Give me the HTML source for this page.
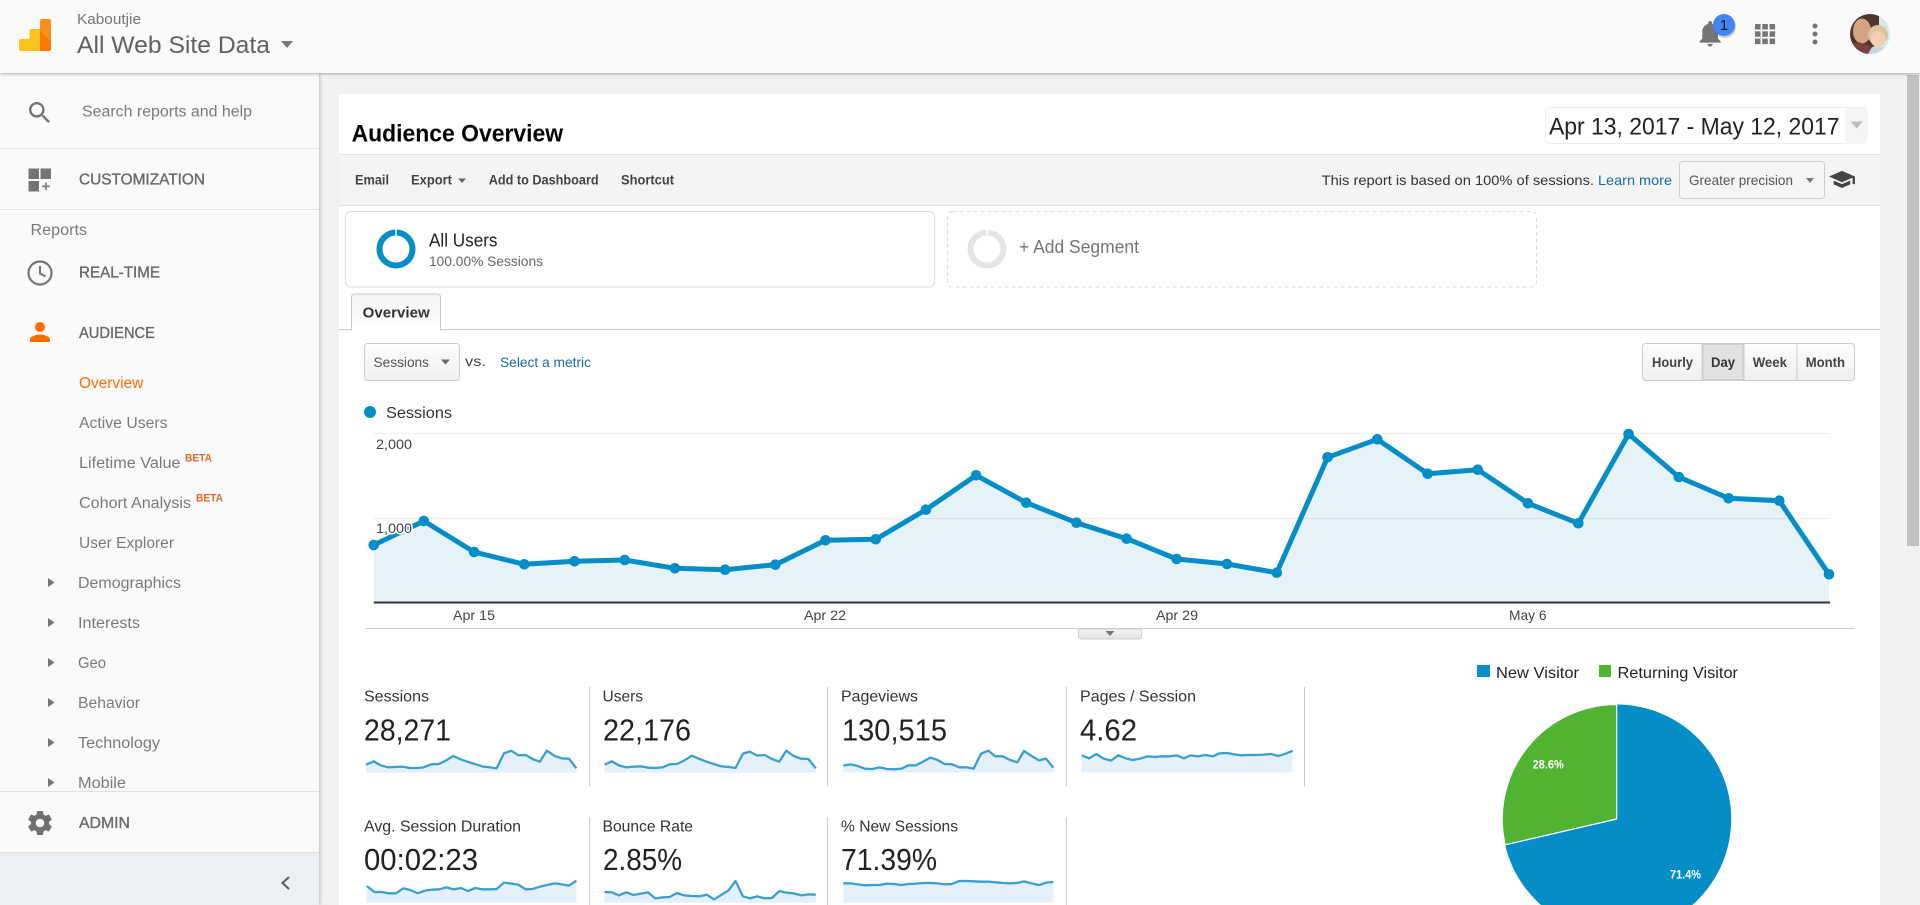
<!DOCTYPE html>
<html lang="en"><head><meta charset="utf-8"><title>Audience Overview - Analytics</title>
<style>
html,body{margin:0;padding:0;width:1920px;height:905px;overflow:hidden;background:#f1f1f1;font-family:"Liberation Sans",sans-serif}
#main{position:absolute;left:339px;top:94px;width:1541px;height:811px;background:#fff}
#toolbar{position:absolute;left:339px;top:154px;width:1541px;height:50px;background:#f4f4f4;border-top:1px solid #e2e2e2;border-bottom:1px solid #ddd}
#side{position:absolute;left:0;top:73px;width:319px;height:832px;background:#fafafa;box-shadow:1px 0 3px rgba(0,0,0,.22)}
#sidefoot{position:absolute;left:0;top:852px;width:319px;height:53px;background:#edf0f3;border-top:1px solid #e0e0e0;box-sizing:border-box}
#head{position:absolute;left:0;top:0;width:1920px;height:73px;background:#fafafa;box-shadow:0 1px 3px rgba(0,0,0,.3)}
#thumb{position:absolute;left:1907px;top:75px;width:12px;height:471px;background:#c1c1c1}
svg{position:absolute;left:0;top:0}
text{font-family:"Liberation Sans",sans-serif}
.s{font-size:15.5px;fill:#7a7a7a}
.m{font-size:15.5px;fill:#6a6a6a;stroke:#6a6a6a;stroke-width:.35}
.b{font-size:11px;font-weight:bold;fill:#e0672b}
.t{font-size:13.5px;font-weight:bold;fill:#444}
.k{font-size:16px;fill:#333}
.v{font-size:31px;fill:#222}
.a{font-size:14px;fill:#444}
.sp{fill:#e4f1fa;stroke:none}
.sl{fill:none;stroke:#3aa0d0;stroke-width:2.3;vector-effect:non-scaling-stroke;stroke-linejoin:round}
</style></head>
<body>
<div id="main"></div>
<div id="toolbar"></div>
<div id="thumb"></div>
<div id="side"></div>
<div id="sidefoot"></div>
<div id="head"></div>
<svg width="1920" height="905" viewBox="0 0 1920 905" xmlns="http://www.w3.org/2000/svg">
<defs>
<linearGradient id="g1" x1="0" y1="0" x2="0" y2="1"><stop offset="0" stop-color="#fdfdfd"/><stop offset="1" stop-color="#efefef"/></linearGradient>
<linearGradient id="g2" x1="0" y1="0" x2="0" y2="1"><stop offset="0" stop-color="#f4f4f4"/><stop offset="1" stop-color="#fff"/></linearGradient>
<linearGradient id="g3" x1="0" y1="0" x2="0" y2="1"><stop offset="0" stop-color="#f6f6f6"/><stop offset="1" stop-color="#e2e2e2"/></linearGradient>
<clipPath id="av"><circle cx="1870" cy="34" r="20"/></clipPath>
<clipPath id="sc"><rect x="0" y="73" width="319" height="718"/></clipPath>
<clipPath id="pg"><rect x="1400" y="640" width="480" height="265"/></clipPath>
</defs>

<!-- header -->
<rect x="19" y="39" width="14" height="12" rx="2" fill="#fdc21c"/>
<rect x="29.5" y="29" width="14" height="22" rx="2" fill="#fdc21c"/>
<rect x="40" y="19" width="11" height="32" rx="2" fill="#f9901e"/>
<path d="M40 30l11 12v7a2 2 0 0 1-2 2h-9z" fill="#f57c00"/>
<text x="77" y="24" font-size="14.5" fill="#757575" textLength="64" lengthAdjust="spacingAndGlyphs">Kaboutjie</text>
<text x="77" y="53" font-size="24" fill="#616161" textLength="193" lengthAdjust="spacingAndGlyphs">All Web Site Data</text>
<path d="M281 41h12l-6 7z" fill="#757575"/>

<g transform="translate(1694.4 17.7) scale(1.31)"><path fill="#757575" d="M12 22c1.1 0 2-.9 2-2h-4c0 1.1.89 2 2 2zm6-6v-5c0-3.07-1.64-5.64-4.5-6.32V4c0-.83-.67-1.5-1.5-1.5s-1.5.67-1.5 1.5v.68C7.63 5.36 6 7.92 6 11v5l-2 2v1h16v-1l-2-2z"/></g>
<circle cx="1725" cy="27" r="11" fill="#000" opacity=".18"/>
<circle cx="1724" cy="25" r="11" fill="#4285f4"/>
<text x="1724" y="30" font-size="14.5" fill="#111" text-anchor="middle">1</text>
<g fill="#757575">
<rect x="1755" y="24" width="5.5" height="5.5"/><rect x="1762.3" y="24" width="5.5" height="5.5"/><rect x="1769.6" y="24" width="5.5" height="5.5"/>
<rect x="1755" y="31.3" width="5.5" height="5.5"/><rect x="1762.3" y="31.3" width="5.5" height="5.5"/><rect x="1769.6" y="31.3" width="5.5" height="5.5"/>
<rect x="1755" y="38.6" width="5.5" height="5.5"/><rect x="1762.3" y="38.6" width="5.5" height="5.5"/><rect x="1769.6" y="38.6" width="5.5" height="5.5"/>
<circle cx="1815" cy="26" r="2.5"/><circle cx="1815" cy="34" r="2.5"/><circle cx="1815" cy="42" r="2.5"/>
</g>
<g clip-path="url(#av)">
<rect x="1850" y="14" width="40" height="40" fill="#d5ecea"/>
<path d="M1850 14h29v12l-7 28h-22z" fill="#4d372e"/>
<ellipse cx="1862" cy="31" rx="9" ry="12.5" fill="#d4a285"/>
<path d="M1850 54v-9l8-3 12 4 2 8z" fill="#7d4040"/>
<ellipse cx="1878" cy="35" rx="10" ry="10" fill="#dcc597"/>
<ellipse cx="1878" cy="39" rx="7.5" ry="8" fill="#f0cfb6"/>
<path d="M1868 54l4-7h12l6 7z" fill="#c8d6e0"/>
</g>

<!-- sidebar -->
<g transform="translate(25.4 98.4) scale(1.2)"><path fill="#757575" d="M15.5 14h-.79l-.28-.27C15.41 12.59 16 11.11 16 9.5 16 5.91 13.09 3 9.5 3S3 5.91 3 9.5 5.91 16 9.5 16c1.61 0 3.09-.59 4.23-1.57l.27.28v.79l5 4.99L20.49 19l-4.99-5zm-6 0C7.01 14 5 11.99 5 9.5S7.01 5 9.5 5 14 7.01 14 9.5 11.99 14 9.5 14z"/></g>
<text x="82" y="116.7" class="s" textLength="170" lengthAdjust="spacingAndGlyphs">Search reports and help</text>
<rect x="0" y="148" width="319" height="1" fill="#e4e4e4"/>
<g fill="#757575"><rect x="28.5" y="168.5" width="10.5" height="10.5"/><rect x="40.5" y="168.5" width="10.5" height="10.5"/><rect x="28.5" y="181" width="10.5" height="10.5"/><path d="M45.2 182.5h1.6v3h3v1.6h-3v3h-1.6v-3h-3v-1.6h3z"/></g>
<text x="79" y="184.5" class="m" textLength="126" lengthAdjust="spacingAndGlyphs">CUSTOMIZATION</text>
<rect x="0" y="209" width="319" height="1" fill="#e4e4e4"/>
<text x="30.5" y="235" class="s" textLength="56.5" lengthAdjust="spacingAndGlyphs">Reports</text>
<circle cx="40" cy="273" r="11.5" fill="none" stroke="#757575" stroke-width="2.2"/>
<path d="M40 266v7.5l5.5 3" fill="none" stroke="#757575" stroke-width="2"/>
<text x="79" y="277.5" class="m" textLength="81" lengthAdjust="spacingAndGlyphs">REAL-TIME</text>
<g transform="translate(25 317) scale(1.25)"><path fill="#ff6d00" d="M12 12c2.21 0 4-1.79 4-4s-1.79-4-4-4-4 1.79-4 4 1.79 4 4 4zm0 2c-2.67 0-8 1.34-8 4v2h16v-2c0-2.66-5.33-4-8-4z"/></g>
<text x="79" y="337.8" class="m" textLength="76" lengthAdjust="spacingAndGlyphs">AUDIENCE</text>
<g clip-path="url(#sc)">
<text x="79" y="387.9" class="s" style="fill:#ff6d00" textLength="64.3" lengthAdjust="spacingAndGlyphs">Overview</text>
<text x="79" y="427.9" class="s" textLength="88.5" lengthAdjust="spacingAndGlyphs">Active Users</text>
<text x="79" y="467.9" class="s" textLength="101.5" lengthAdjust="spacingAndGlyphs">Lifetime Value</text>
<text x="185" y="461.5" class="b" textLength="27" lengthAdjust="spacingAndGlyphs">BETA</text>
<text x="79" y="507.9" class="s" textLength="112" lengthAdjust="spacingAndGlyphs">Cohort Analysis</text>
<text x="196" y="501.5" class="b" textLength="27" lengthAdjust="spacingAndGlyphs">BETA</text>
<text x="79" y="547.9" class="s" textLength="95" lengthAdjust="spacingAndGlyphs">User Explorer</text>
<text x="78" y="587.9" class="s" textLength="103" lengthAdjust="spacingAndGlyphs">Demographics</text>
<text x="78" y="627.9" class="s" textLength="62" lengthAdjust="spacingAndGlyphs">Interests</text>
<text x="78" y="667.9" class="s" textLength="28" lengthAdjust="spacingAndGlyphs">Geo</text>
<text x="78" y="707.9" class="s" textLength="62" lengthAdjust="spacingAndGlyphs">Behavior</text>
<text x="78" y="747.9" class="s" textLength="82" lengthAdjust="spacingAndGlyphs">Technology</text>
<text x="78" y="787.9" class="s" textLength="48" lengthAdjust="spacingAndGlyphs">Mobile</text>
<g fill="#757575"><path d="M48 578v9l6.5-4.5z"/><path d="M48 618v9l6.5-4.5z"/><path d="M48 658v9l6.5-4.5z"/><path d="M48 698v9l6.5-4.5z"/><path d="M48 738v9l6.5-4.5z"/><path d="M48 778v9l6.5-4.5z"/></g>
</g>
<rect x="0" y="791" width="319" height="1" fill="#e0e0e0"/>
<g transform="translate(25.6 808.6) scale(1.2)"><path fill="#707070" d="M19.43 12.98c.04-.32.07-.64.07-.98s-.03-.66-.07-.98l2.11-1.65c.19-.15.24-.42.12-.64l-2-3.46c-.12-.22-.39-.3-.61-.22l-2.49 1c-.52-.4-1.08-.73-1.69-.98l-.38-2.65C14.46 2.18 14.25 2 14 2h-4c-.25 0-.46.18-.49.42l-.38 2.65c-.61.25-1.17.59-1.69.98l-2.49-1c-.23-.09-.49 0-.61.22l-2 3.46c-.13.22-.07.49.12.64l2.11 1.65c-.04.32-.07.65-.07.98s.03.66.07.98l-2.11 1.65c-.19.15-.24.42-.12.64l2 3.46c.12.22.39.3.61.22l2.49-1c.52.4 1.08.73 1.69.98l.38 2.65c.03.24.24.42.49.42h4c.25 0 .46-.18.49-.42l.38-2.65c.61-.25 1.17-.59 1.69-.98l2.49 1c.23.09.49 0 .61-.22l2-3.46c.12-.22.07-.49-.12-.64l-2.11-1.65zM12 15.5c-1.93 0-3.5-1.57-3.5-3.5s1.57-3.5 3.5-3.5 3.5 1.57 3.5 3.5-1.57 3.5-3.5 3.5z"/></g>
<text x="79" y="828" class="m" textLength="51" lengthAdjust="spacingAndGlyphs">ADMIN</text>
<path d="M289 877l-6.5 6 6.5 6" fill="none" stroke="#616161" stroke-width="2.2"/>

<!-- title row -->
<text x="351.6" y="141.5" font-size="24" font-weight="bold" fill="#000" textLength="211.5" lengthAdjust="spacingAndGlyphs">Audience Overview</text>
<rect x="1545.5" y="107.5" width="321.5" height="36" rx="5" fill="#fff" stroke="#eee"/>
<path d="M1845 108h17a5 5 0 0 1 5 5v26a5 5 0 0 1-5 5h-17z" fill="#f5f5f5"/>
<path d="M1850.5 121.5h12.5l-6.25 7z" fill="#bdbdbd"/>
<text x="1549" y="134.5" font-size="24.5" fill="#222" textLength="290.5" lengthAdjust="spacingAndGlyphs">Apr 13, 2017 - May 12, 2017</text>

<!-- toolbar -->
<text x="355" y="184.5" class="t" textLength="34" lengthAdjust="spacingAndGlyphs">Email</text>
<text x="411" y="184.5" class="t" textLength="41" lengthAdjust="spacingAndGlyphs">Export</text>
<path d="M458 178.5h8l-4 4.5z" fill="#666"/>
<text x="488.7" y="184.5" class="t" textLength="110" lengthAdjust="spacingAndGlyphs">Add to Dashboard</text>
<text x="621" y="184.5" class="t" textLength="53" lengthAdjust="spacingAndGlyphs">Shortcut</text>
<text x="1321.7" y="185" font-size="14" fill="#333" textLength="272.3" lengthAdjust="spacingAndGlyphs">This report is based on 100% of sessions.</text>
<text x="1598" y="185" font-size="14" fill="#1a6aa5" textLength="74" lengthAdjust="spacingAndGlyphs">Learn more</text>
<rect x="1679.5" y="161.5" width="145" height="37" rx="3" fill="#f5f5f5" stroke="#ccc"/>
<text x="1689" y="185" font-size="14" fill="#555" textLength="104" lengthAdjust="spacingAndGlyphs">Greater precision</text>
<path d="M1806 178h8l-4 5z" fill="#777"/>
<g transform="translate(1827.8 168) scale(1.18 .95)"><path fill="#444" d="M5 13.18v4L12 21l7-3.82v-4L12 17l-7-3.82zM12 3L1 9l11 6 9-4.91V17h2V9L12 3z"/></g>

<!-- segments -->
<rect x="345.5" y="211.5" width="589" height="75.5" rx="5" fill="#fff" stroke="#ddd"/>
<circle cx="396" cy="249" r="16.5" fill="none" stroke="#058dc7" stroke-width="6"/>
<path d="M396 228v9" stroke="#fff" stroke-width="1.5"/>
<text x="429" y="246.7" font-size="18" fill="#222" textLength="68.5" lengthAdjust="spacingAndGlyphs">All Users</text>
<text x="429" y="266" font-size="14" fill="#666" textLength="114" lengthAdjust="spacingAndGlyphs">100.00% Sessions</text>
<rect x="947.5" y="211.5" width="589" height="75.5" rx="5" fill="#fff" stroke="#ddd" stroke-dasharray="4 3"/>
<circle cx="987" cy="249" r="16.5" fill="none" stroke="#e5e5e5" stroke-width="6"/>
<path d="M987 228v9" stroke="#fff" stroke-width="1.5"/>
<text x="1019" y="253" font-size="18" fill="#757575" textLength="120" lengthAdjust="spacingAndGlyphs">+ Add Segment</text>

<!-- tab -->
<rect x="339" y="329" width="1541" height="1" fill="#ccc"/>
<path d="M351.5 330v-33a3 3 0 0 1 3-3h83a3 3 0 0 1 3 3v33z" fill="url(#g2)" stroke="#ccc"/>
<rect x="352" y="328.5" width="88" height="2" fill="#fff"/>
<text x="362.7" y="317.7" font-size="14.5" font-weight="bold" fill="#333" textLength="67" lengthAdjust="spacingAndGlyphs">Overview</text>

<!-- controls -->
<rect x="364.5" y="343.5" width="95" height="37" rx="3" fill="url(#g1)" stroke="#ccc"/>
<text x="373.5" y="367" font-size="14" fill="#555" textLength="55.5" lengthAdjust="spacingAndGlyphs">Sessions</text>
<path d="M441 359.5h9l-4.5 5z" fill="#666"/>
<text x="465" y="366" font-size="14" fill="#444" textLength="21" lengthAdjust="spacingAndGlyphs">vs.</text>
<text x="500" y="366.8" font-size="14" fill="#1a6aa5" textLength="91" lengthAdjust="spacingAndGlyphs">Select a metric</text>

<rect x="1642.5" y="343.5" width="212" height="37" rx="3" fill="url(#g1)" stroke="#ccc"/>
<rect x="1702.5" y="344" width="41" height="36" fill="#e2e2e2" stroke="#cfcfcf" stroke-width="2"/>
<rect x="1743.5" y="344" width="1" height="36" fill="#ccc"/>
<rect x="1796.5" y="344" width="1" height="36" fill="#ccc"/>
<text x="1652" y="367" class="t" textLength="41" lengthAdjust="spacingAndGlyphs">Hourly</text>
<text x="1711" y="367" class="t" style="fill:#333" textLength="24" lengthAdjust="spacingAndGlyphs">Day</text>
<text x="1752.7" y="367" class="t" textLength="34.3" lengthAdjust="spacingAndGlyphs">Week</text>
<text x="1805.7" y="367" class="t" textLength="39.3" lengthAdjust="spacingAndGlyphs">Month</text>

<!-- legend -->
<circle cx="370" cy="412" r="6" fill="#058dc7"/>
<text x="386" y="418" font-size="16" fill="#333" textLength="66" lengthAdjust="spacingAndGlyphs">Sessions</text>

<!-- chart -->
<rect x="373.7" y="433" width="1456.3" height="1" fill="#eee"/>
<rect x="373.7" y="518" width="1456.3" height="1" fill="#eee"/>
<polygon fill="#058dc7" fill-opacity=".105" points="373.7,602 373.7,545 423.9,521 474.1,552 524.3,564.3 574.5,561.3 624.7,560 674.9,568.3 725.1,569.7 775.3,564.7 825.5,540.3 875.7,539.3 925.9,509.7 976.1,475.3 1026.3,502.7 1076.5,522.7 1126.7,538.7 1176.6,559 1227,564 1276.8,572.7 1327.6,457.3 1377.3,439.3 1427.6,473.7 1477.8,469.7 1528,503.3 1578.3,523.3 1628.6,434 1678.8,477 1728.6,498.3 1779.3,500.7 1829,574.3 1829,602"/>
<rect x="373.7" y="601.5" width="1456.3" height="2" fill="#333"/>
<polyline fill="none" stroke="#058dc7" stroke-width="5" stroke-linejoin="round" points="373.7,545 423.9,521 474.1,552 524.3,564.3 574.5,561.3 624.7,560 674.9,568.3 725.1,569.7 775.3,564.7 825.5,540.3 875.7,539.3 925.9,509.7 976.1,475.3 1026.3,502.7 1076.5,522.7 1126.7,538.7 1176.6,559 1227,564 1276.8,572.7 1327.6,457.3 1377.3,439.3 1427.6,473.7 1477.8,469.7 1528,503.3 1578.3,523.3 1628.6,434 1678.8,477 1728.6,498.3 1779.3,500.7 1829,574.3"/>
<g fill="#058dc7">
<circle cx="373.7" cy="545" r="5.3"/><circle cx="423.9" cy="521" r="5.3"/><circle cx="474.1" cy="552" r="5.3"/><circle cx="524.3" cy="564.3" r="5.3"/><circle cx="574.5" cy="561.3" r="5.3"/><circle cx="624.7" cy="560" r="5.3"/><circle cx="674.9" cy="568.3" r="5.3"/><circle cx="725.1" cy="569.7" r="5.3"/><circle cx="775.3" cy="564.7" r="5.3"/><circle cx="825.5" cy="540.3" r="5.3"/><circle cx="875.7" cy="539.3" r="5.3"/><circle cx="925.9" cy="509.7" r="5.3"/><circle cx="976.1" cy="475.3" r="5.3"/><circle cx="1026.3" cy="502.7" r="5.3"/><circle cx="1076.5" cy="522.7" r="5.3"/><circle cx="1126.7" cy="538.7" r="5.3"/><circle cx="1176.6" cy="559" r="5.3"/><circle cx="1227" cy="564" r="5.3"/><circle cx="1276.8" cy="572.7" r="5.3"/><circle cx="1327.6" cy="457.3" r="5.3"/><circle cx="1377.3" cy="439.3" r="5.3"/><circle cx="1427.6" cy="473.7" r="5.3"/><circle cx="1477.8" cy="469.7" r="5.3"/><circle cx="1528" cy="503.3" r="5.3"/><circle cx="1578.3" cy="523.3" r="5.3"/><circle cx="1628.6" cy="434" r="5.3"/><circle cx="1678.8" cy="477" r="5.3"/><circle cx="1728.6" cy="498.3" r="5.3"/><circle cx="1779.3" cy="500.7" r="5.3"/><circle cx="1829" cy="574.3" r="5.3"/>
</g>
<text x="376" y="449" class="a" textLength="36" lengthAdjust="spacingAndGlyphs">2,000</text>
<text x="376" y="533" class="a" style="paint-order:stroke;stroke:#fff;stroke-width:3px" textLength="36" lengthAdjust="spacingAndGlyphs">1,000</text>
<text x="453" y="620" class="a" textLength="42" lengthAdjust="spacingAndGlyphs">Apr 15</text>
<text x="804" y="620" class="a" textLength="42" lengthAdjust="spacingAndGlyphs">Apr 22</text>
<text x="1156" y="620" class="a" textLength="42" lengthAdjust="spacingAndGlyphs">Apr 29</text>
<text x="1509" y="620" class="a" textLength="37.5" lengthAdjust="spacingAndGlyphs">May 6</text>
<rect x="365.5" y="628" width="1489" height="1" fill="#ccc"/>
<path d="M1078.5 629v8a2 2 0 0 0 2 2h59a2 2 0 0 0 2-2v-8z" fill="url(#g3)" stroke="#d0d0d0"/>
<path d="M1105.5 631h9l-4.500 5z" fill="#777"/>

<!-- metric separators -->
<g fill="#ccc">
<rect x="589" y="687" width="1" height="99"/><rect x="827" y="687" width="1" height="99"/><rect x="1066" y="687" width="1" height="99"/><rect x="1304" y="687" width="1" height="99"/>
<rect x="589" y="817" width="1" height="88"/><rect x="827" y="817" width="1" height="88"/><rect x="1066" y="817" width="1" height="88"/>
</g>

<!-- metrics row 1 -->
<text x="364" y="701.7" class="k" textLength="65" lengthAdjust="spacingAndGlyphs">Sessions</text>
<text x="364" y="740.5" class="v" textLength="87" lengthAdjust="spacingAndGlyphs">28,271</text>
<text x="602.5" y="701.7" class="k" textLength="40.5" lengthAdjust="spacingAndGlyphs">Users</text>
<text x="603" y="740.5" class="v" textLength="88" lengthAdjust="spacingAndGlyphs">22,176</text>
<text x="841" y="701.7" class="k" textLength="77" lengthAdjust="spacingAndGlyphs">Pageviews</text>
<text x="842" y="740.5" class="v" textLength="105" lengthAdjust="spacingAndGlyphs">130,515</text>
<text x="1080" y="701.7" class="k" textLength="116" lengthAdjust="spacingAndGlyphs">Pages / Session</text>
<text x="1080" y="740.5" class="v" textLength="57" lengthAdjust="spacingAndGlyphs">4.62</text>

<!-- metrics row 2 -->
<text x="364" y="831.7" class="k" textLength="157" lengthAdjust="spacingAndGlyphs">Avg. Session Duration</text>
<text x="364" y="870" class="v" textLength="114" lengthAdjust="spacingAndGlyphs">00:02:23</text>
<text x="602.5" y="831.7" class="k" textLength="90.5" lengthAdjust="spacingAndGlyphs">Bounce Rate</text>
<text x="603" y="870" class="v" textLength="79" lengthAdjust="spacingAndGlyphs">2.85%</text>
<text x="841" y="831.7" class="k" textLength="117" lengthAdjust="spacingAndGlyphs">% New Sessions</text>
<text x="841" y="870" class="v" textLength="96" lengthAdjust="spacingAndGlyphs">71.39%</text>

<!-- sparklines -->
<g transform="translate(340 660) scale(.4337 .33333)">
<polygon class="sp" points="60,338 60,314 78,304 94,316 110,322 127,321 144,320 161,324 177,324 193,322 210,313 228,312 244,302 261,288 280,299 296,306 313,313 330,320 346,322 361,325 378,280 395,272 411,286 428,285 444,297 461,305 477,272 495,288 511,295 528,296 545,325 545,338"/>
<polyline class="sl" points="60,314 78,304 94,316 110,322 127,321 144,320 161,324 177,324 193,322 210,313 228,312 244,302 261,288 280,299 296,306 313,313 330,320 346,322 361,325 378,280 395,272 411,286 428,285 444,297 461,305 477,272 495,288 511,295 528,296 545,325"/>
<polygon class="sp" points="610,338 610,314 627,304 643,316 660,322 677,320 694,319 710,323 727,324 744,322 760,313 777,312 793,302 811,287 829,297 845,305 862,312 879,319 896,321 912,324 929,281 945,275 962,287 979,285 996,297 1013,305 1029,272 1046,288 1063,296 1080,297 1097,325 1097,338"/>
<polyline class="sl" points="610,314 627,304 643,316 660,322 677,320 694,319 710,323 727,324 744,322 760,313 777,312 793,302 811,287 829,297 845,305 862,312 879,319 896,321 912,324 929,281 945,275 962,287 979,285 996,297 1013,305 1029,272 1046,288 1063,296 1080,297 1097,325"/>
<polygon class="sp" points="60,728 62,678 79,696 96,696 112,700 129,700 146,685 162,690 179,700 196,692 212,689 229,688 245,682 262,688 279,684 295,693 312,684 329,688 346,688 361,687 378,668 395,671 411,674 428,688 444,687 461,680 477,675 495,670 511,673 528,677 545,662 545,728"/>
<polyline class="sl" points="62,678 79,696 96,696 112,700 129,700 146,685 162,690 179,700 196,692 212,689 229,688 245,682 262,688 279,684 295,693 312,684 329,688 346,688 361,687 378,668 395,671 411,674 428,688 444,687 461,680 477,675 495,670 511,673 528,677 545,662"/>
<polygon class="sp" points="610,728 610,696 627,697 643,706 660,697 677,705 694,701 710,697 727,715 744,712 760,711 777,699 793,706 811,708 829,709 846,704 862,718 879,705 896,691 912,663 929,709 945,715 962,709 979,715 996,714 1013,693 1029,698 1046,700 1063,706 1080,703 1097,704 1097,728"/>
<polyline class="sl" points="610,696 627,697 643,706 660,697 677,705 694,701 710,697 727,715 744,712 760,711 777,699 793,706 811,708 829,709 846,704 862,718 879,705 896,691 912,663 929,709 945,715 962,709 979,715 996,714 1013,693 1029,698 1046,700 1063,706 1080,703 1097,704"/>
</g>
<g transform="translate(820 680) scale(.33333)">
<polygon class="sp" points="70,277 70,257 92,253 113,258 135,266 157,267 179,262 201,267 222,268 244,266 265,256 288,256 309,245 331,233 353,240 374,252 396,253 418,262 440,262 461,266 483,221 505,212 526,229 548,229 570,240 592,247 612,213 635,228 657,241 678,236 700,263 700,277"/>
<polyline class="sl" points="70,257 92,253 113,258 135,266 157,267 179,262 201,267 222,268 244,266 265,256 288,256 309,245 331,233 353,240 374,252 396,253 418,262 440,262 461,266 483,221 505,212 526,229 548,229 570,240 592,247 612,213 635,228 657,241 678,236 700,263"/>
<polygon class="sp" points="785,277 785,226 807,235 829,222 851,236 873,242 895,226 917,235 938,240 960,236 982,229 1004,231 1026,229 1048,229 1070,226 1092,235 1112,226 1134,229 1156,225 1178,229 1199,220 1221,219 1243,223 1265,226 1287,225 1309,225 1331,224 1353,222 1375,228 1397,221 1418,212 1418,277"/>
<polyline class="sl" points="785,226 807,235 829,222 851,236 873,242 895,226 917,235 938,240 960,236 982,229 1004,231 1026,229 1048,229 1070,226 1092,235 1112,226 1134,229 1156,225 1178,229 1199,220 1221,219 1243,223 1265,226 1287,225 1309,225 1331,224 1353,222 1375,228 1397,221 1418,212"/>
<polygon class="sp" points="70,668 70,610 92,610 113,613 135,616 157,615 179,615 201,611 222,612 244,615 265,612 288,611 309,609 331,609 353,610 374,613 396,612 418,603 440,603 461,604 483,605 505,605 526,607 548,609 570,610 592,609 612,604 635,610 657,615 678,608 700,606 700,668"/>
<polyline class="sl" points="70,610 92,610 113,613 135,616 157,615 179,615 201,611 222,612 244,615 265,612 288,611 309,609 331,609 353,610 374,613 396,612 418,603 440,603 461,604 483,605 505,605 526,607 548,609 570,610 592,609 612,604 635,610 657,615 678,608 700,606"/>
</g>

<!-- pie -->
<rect x="1477" y="665" width="13" height="12" fill="#058dc7"/>
<text x="1496" y="677.8" font-size="16" fill="#222" textLength="83" lengthAdjust="spacingAndGlyphs">New Visitor</text>
<rect x="1599" y="665" width="12" height="12" fill="#50b432"/>
<text x="1617.5" y="677.8" font-size="16" fill="#222" textLength="120.5" lengthAdjust="spacingAndGlyphs">Returning Visitor</text>
<g clip-path="url(#pg)">
<circle cx="1616.7" cy="819" r="114.5" fill="#058dc7"/>
<path d="M1616.7 819L1505.2 844.8A114.5 114.5 0 0 1 1616.7 704.5Z" fill="#50b432" stroke="#fff" stroke-width="1.2"/>
</g>
<text x="1532.7" y="768.3" font-size="11.5" font-weight="bold" fill="#fff" textLength="31" lengthAdjust="spacingAndGlyphs">28.6%</text>
<text x="1670" y="878.3" font-size="11.5" font-weight="bold" fill="#fff" textLength="31" lengthAdjust="spacingAndGlyphs">71.4%</text>
</svg>
</body></html>
